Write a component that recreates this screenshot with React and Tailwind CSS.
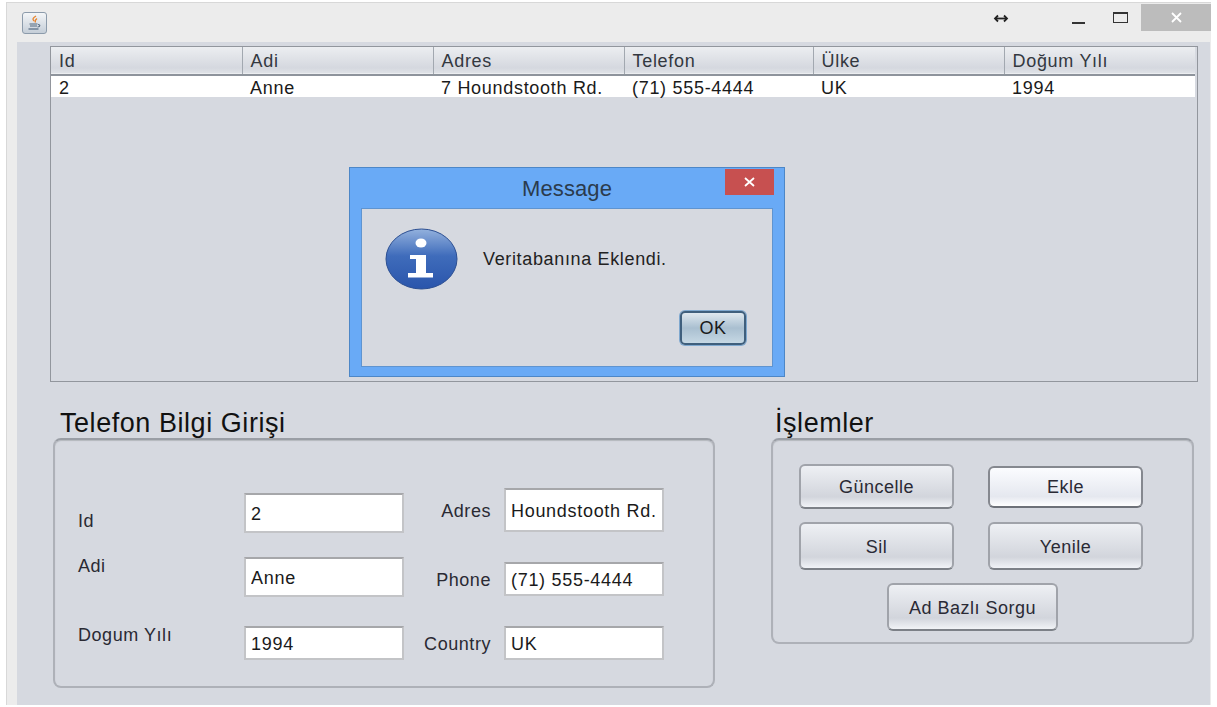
import React from "react";

const FONT = "font-['Liberation_Sans',Arial,sans-serif]";

const columns = [
  { name: "Id", width: "w-[191px]", value: "2" },
  { name: "Adi", width: "w-[191px]", value: "Anne" },
  { name: "Adres", width: "w-[191px]", value: "7 Houndstooth Rd." },
  { name: "Telefon", width: "w-[189px]", value: "(71) 555-4444" },
  { name: "Ülke", width: "w-[191px]", value: "UK" },
  { name: "Doğum Yılı", width: "w-[191px]", value: "1994" },
];

function JavaIcon() {
  return (
    <div className="w-[25px] h-[22px] rounded-[3px] border border-[#8c9bab] bg-linear-to-b from-[#f4f6f8] to-[#c5ced8] flex items-center justify-center">
      <svg width="17" height="17" viewBox="0 0 17 17" fill="none">
        <path d="M10 1C7 3 6 4 8 6M11 3.5C9 5 8.5 6 9.5 7.5" stroke="#e8842c" strokeWidth="1.3" />
        <path d="M3.5 9h8M4 11h7M12 9.5c2.5 0 2.5 2.5-.5 2.5" stroke="#53687f" strokeWidth="1.1" />
        <path d="M2.5 14h10" stroke="#53687f" strokeWidth="1.2" />
      </svg>
    </div>
  );
}

function TitleBar() {
  return (
    <div className="h-[39px] flex items-start">
      <div className="ml-[15px] mt-[9px]">
        <JavaIcon />
      </div>
      <div className="ml-auto flex items-start">
        <svg className="mt-[11px]" width="16" height="9" viewBox="0 0 16 9" fill="none">
          <path d="M2 4.5h12" stroke="#222" strokeWidth="1.8" />
          <path d="M5 1.5 2 4.5l3 3M11 1.5l3 3-3 3" stroke="#222" strokeWidth="1.8" />
        </svg>
        <div className="ml-[63px] mt-[19px] w-[13px] h-[2px] bg-[#333]" />
        <div className="ml-[28px] mt-[9px] w-[15px] h-[11px] border border-[#333] border-t-2" />
        <div className="ml-[13px] mt-px w-[70px] h-[27px] bg-[#bcbcbc] flex items-center justify-center">
          <svg width="11" height="11" viewBox="0 0 11 11" fill="none">
            <path d="M1 1l9 9M10 1l-9 9" stroke="#fff" strokeWidth="1.8" />
          </svg>
        </div>
      </div>
    </div>
  );
}

function DataTable() {
  return (
    <table className="table-fixed border-collapse text-[18px] tracking-[0.7px] text-[#1a1a1a]">
      <thead>
        <tr className="h-[28px] bg-linear-to-b from-[#eceef1] via-[#d5d8df] via-80% to-[#dfe2e7] border-b-2 border-[#8e949c]">
          {columns.map((col, i) => (
            <th
              key={col.name}
              className={`${col.width} p-0 pl-[8px] pt-[2px] leading-[21px] text-left font-normal text-[#33383f] ${i < 5 ? "border-r border-[#a2a8b0]" : ""}`}
            >
              {col.name}
            </th>
          ))}
        </tr>
      </thead>
      <tbody>
        <tr className="h-[21px] bg-white">
          {columns.map((col) => (
            <td key={col.name} className="p-0 pl-[8px] pt-[3px] leading-[18px]">
              {col.value}
            </td>
          ))}
        </tr>
      </tbody>
    </table>
  );
}

function InfoIcon() {
  return (
    <svg width="73" height="62" viewBox="0 0 73 62">
      <defs>
        <linearGradient id="infoBlue" x1="0" y1="0" x2="0" y2="1">
          <stop offset="0" stopColor="#93b1dd" />
          <stop offset="0.45" stopColor="#3f6cbb" />
          <stop offset="1" stopColor="#2a55ab" />
        </linearGradient>
      </defs>
      <ellipse cx="36.5" cy="31" rx="35.5" ry="30" fill="url(#infoBlue)" stroke="#2c4f92" />
      <ellipse cx="36" cy="15" rx="5.5" ry="4.5" fill="#fff" />
      <path d="M25 27h16v18h7v4.5H23V45h8V31h-6z" fill="#fff" />
    </svg>
  );
}

function MessageDialog() {
  return (
    <div className="absolute left-[332px] top-[125px] w-[436px] h-[210px] bg-[#69aaf6] border border-[#4d87c7]">
      <div className="h-[40px] relative flex items-center justify-center">
        <span className="text-[22px] tracking-[0.1px] text-[#2b3b4d] mt-px">Message</span>
        <div className="absolute right-[10px] top-px w-[49px] h-[26px] bg-[#c75050] flex items-center justify-center">
          <svg width="11" height="10" viewBox="0 0 11 10" fill="none">
            <path d="M1 1l9 8M10 1 1 9" stroke="#fff" strokeWidth="1.8" />
          </svg>
        </div>
      </div>
      <div className="mx-[11px] h-[159px] bg-[#d6d9e0] border border-[#5f94d0]">
        <div className="flex items-start pl-[23px] pt-[19px]">
          <InfoIcon />
          <span className="ml-[25px] mt-[19px] text-[18px] leading-[24px] tracking-[0.65px] text-[#222]">Veritabanına Eklendi.</span>
        </div>
        <div className="flex justify-end pr-[26px] mt-[21px]">
          <button className="w-[66px] h-[34px] pt-px rounded-[5px] border-2 border-[#3f5f7d] ring-1 ring-[#7fa8cf] bg-linear-to-b from-[#dfe8ef] via-[#a9bfd0] to-[#c6d8e4] text-[18px] tracking-[0.5px] text-[#1a1a1a]">
            OK
          </button>
        </div>
      </div>
    </div>
  );
}

function GroupBox({ title, className, titleClass, children }) {
  return (
    <section className={className}>
      <h2 className={`h-[29px] text-[27px] leading-[29px] tracking-[0.55px] font-normal text-[#111] ${titleClass}`}>{title}</h2>
      <div className="rounded-[8px] border-2 border-[#aeb1b8] border-t-[#9a9ea5] shadow-[inset_0_1px_1px_#b4b7bd]">{children}</div>
    </section>
  );
}

function Field({ value, className }) {
  return (
    <input
      readOnly
      value={value}
      className={`w-[160px] bg-white border-2 border-[#c3c4c7] border-t-[#a6a7aa] pl-[5px] pt-[2px] text-[18px] tracking-[0.7px] text-[#1a1a1a] outline-none ${className}`}
    />
  );
}

function Label({ children, className = "" }) {
  return <span className={`h-[20px] leading-[20px] text-[18px] tracking-[0.55px] text-[#2a2a33] ${className}`}>{children}</span>;
}

function EntryForm() {
  return (
    <div className="h-[246px] flex pl-[23px]">
      <div className="w-[166px] pt-[54px]">
        <div className="h-[40px] pt-[17px]">
          <Label className="block">Id</Label>
        </div>
        <Label className="block mt-[22px]">Adi</Label>
        <Label className="block mt-[49px]">Dogum Yılı</Label>
      </div>
      <div className="w-[172px] pt-[53px] flex flex-col">
        <Field value="2" className="h-[40px]" />
        <Field value="Anne" className="h-[40px] mt-[24px]" />
        <Field value="1994" className="h-[34px] mt-[29px]" />
      </div>
      <div className="w-[88px] flex flex-col items-end pt-[49px] pr-[13px] whitespace-nowrap">
        <div className="h-[44px] flex items-center"><Label>Adres</Label></div>
        <div className="h-[34px] mt-[30px] flex items-center"><Label>Phone</Label></div>
        <div className="h-[34px] mt-[30px] flex items-center"><Label>Country</Label></div>
      </div>
      <div className="pt-[48px] flex flex-col">
        <Field value="Houndstooth Rd." className="h-[44px]" />
        <Field value="(71) 555-4444" className="h-[34px] mt-[30px]" />
        <Field value="UK" className="h-[34px] mt-[30px]" />
      </div>
    </div>
  );
}

function ActionButton({ label, className = "", light = false }) {
  const skin = light
    ? "from-[#fbfcff] via-[#e5e8ef] via-75% to-[#ffffff] border-[#85888f] border-b-[#6d7178]"
    : "from-[#eef0f4] via-[#d2d5dc] via-75% to-[#f1f3f7] border-[#a0a3aa] border-b-[#7c8087]";
  return (
    <button
      className={`rounded-[6px] border-2 pt-[2px] bg-linear-to-b text-[18px] tracking-[0.5px] text-[#2a2a35] ${skin} ${className}`}
    >
      {label}
    </button>
  );
}

function ActionsPanel() {
  return (
    <div className="h-[202px] px-[26px] pt-[24px] flex flex-col">
      <div className="flex items-center h-[45px] gap-[34px]">
        <ActionButton label="Güncelle" className="w-[155px] h-[45px]" />
        <ActionButton label="Ekle" className="w-[155px] h-[42px]" light />
      </div>
      <div className="flex mt-[13px] gap-[34px]">
        <ActionButton label="Sil" className="w-[155px] h-[48px]" />
        <ActionButton label="Yenile" className="w-[155px] h-[48px]" />
      </div>
      <ActionButton label="Ad Bazlı Sorgu" className="w-[171px] h-[48px] mt-[13px] ml-[88px]" />
    </div>
  );
}

export default function App() {
  return (
    <div className={`w-[1217px] h-[707px] bg-white pl-[6px] pt-[2px] ${FONT}`}>
      <div className="w-[1205px] h-[703px] bg-[#ececec] border-l border-t border-[#d8d8d8]">
        <TitleBar />
        <div className="relative ml-[10px] mr-[1px] h-[663px] bg-[#d6d9e0] pt-[4px] pl-[33px]">
          <div className="w-[1148px] h-[336px] border border-[#92969d]">
            <DataTable />
          </div>
          <MessageDialog />
          <div className="flex mt-[27px]">
            <GroupBox title="Telefon Bilgi Girişi" className="ml-[3px] w-[662px]" titleClass="pl-[7px]">
              <EntryForm />
            </GroupBox>
            <GroupBox title="İşlemler" className="ml-[56px] w-[423px]" titleClass="pl-[4px]">
              <ActionsPanel />
            </GroupBox>
          </div>
        </div>
      </div>
    </div>
  );
}
